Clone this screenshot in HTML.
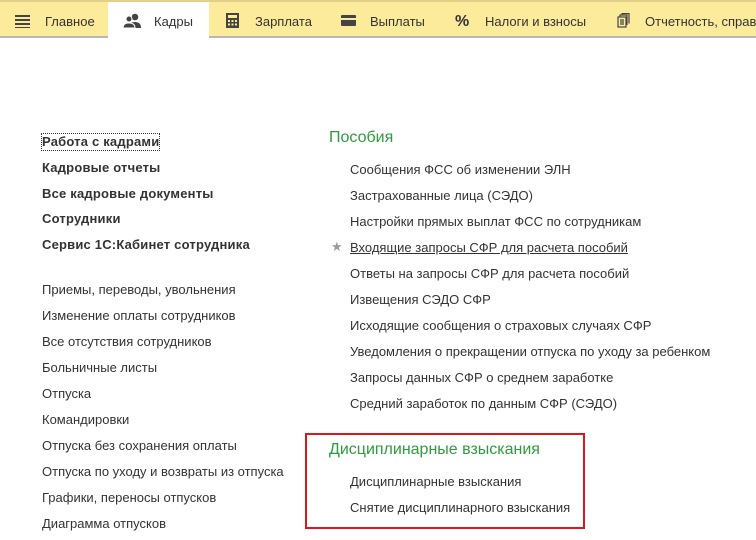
<!DOCTYPE html>
<html><head><meta charset="utf-8"><style>
body{margin:0;width:756px;height:540px;background:#fff;font-family:"Liberation Sans",Arial,sans-serif;color:#333;position:relative;overflow:hidden;font-size:13px}
.bar{position:absolute;left:0;top:0;width:756px;height:38px;background:#fbeb9b;border-top:2px solid #e0d08a;border-bottom:2px solid #b8b8b8;box-sizing:border-box}
.tab{position:absolute;top:0;height:36px;line-height:39px;font-size:13px;color:#333;white-space:nowrap}
.act{background:#fff}
.ic{position:absolute;top:11px}
.t{position:absolute;white-space:nowrap;line-height:16px;margin-top:1px}
.b{font-weight:bold;letter-spacing:0.2px}
.g{color:#2e9c3e;font-size:16px}
</style></head><body>
<div class="bar">
<div class="tab act" style="left:108px;width:101px"></div>
<svg class="ic" style="left:15px;top:12px" width="15" height="14"><rect y="1" width="15" height="2" fill="#444"/><rect y="5" width="15" height="2" fill="#444"/><rect y="9" width="15" height="2" fill="#444"/><rect y="13" width="15" height="1.5" fill="#444"/></svg>
<div class="tab" style="left:45px">Главное</div>
<svg class="ic" style="left:123px" width="20" height="15"><circle cx="12" cy="4" r="3.3" fill="#444"/><path d="M6 15q0-6 6-6t6 6z" fill="#444"/><circle cx="6" cy="6" r="3" fill="#444" stroke="#fff"/><path d="M0 15q0-5 6-5t6 5z" fill="#444" stroke="#fff"/></svg>
<div class="tab" style="left:154px">Кадры</div>
<svg class="ic" style="left:226px" width="13" height="15"><rect width="13" height="15" fill="#444"/><rect x="2" y="2" width="9" height="3" fill="#fbeb9b"/><g fill="#fbeb9b"><rect x="2" y="7" width="2" height="2"/><rect x="5.5" y="7" width="2" height="2"/><rect x="9" y="7" width="2" height="2"/><rect x="2" y="10.5" width="2" height="2"/><rect x="5.5" y="10.5" width="2" height="2"/><rect x="9" y="10.5" width="2" height="2"/></g></svg>
<div class="tab" style="left:255px">Зарплата</div>
<svg class="ic" style="left:341px;top:13px" width="15" height="11"><rect width="15" height="11" rx="1" fill="#444"/><rect y="3" width="15" height="2" fill="#fbeb9b"/></svg>
<div class="tab" style="left:370px">Выплаты</div>
<div class="tab b" style="left:455px;font-size:16px">%</div>
<div class="tab" style="left:485px">Налоги и взносы</div>
<svg class="ic" style="left:617px" width="13" height="15" fill="none" stroke="#444" stroke-width="1.2"><rect x="1" y="4" width="8" height="10"/><path d="M3 4V2h7v10M5 2V0.5h7v10M3 7h4M3 9h4M3 11h4"/></svg>
<div class="tab" style="left:645px">Отчетность, справ</div>
</div>
<div class="t b" style="left:42px;top:133px;outline:1px dotted #333;outline-offset:0">Работа с кадрами</div>
<div class="t b" style="left:42px;top:159px">Кадровые отчеты</div>
<div class="t b" style="left:42px;top:185px">Все кадровые документы</div>
<div class="t b" style="left:42px;top:210px">Сотрудники</div>
<div class="t b" style="left:42px;top:236px">Сервис 1С:Кабинет сотрудника</div>
<div class="t" style="left:42px;top:281px">Приемы, переводы, увольнения</div>
<div class="t" style="left:42px;top:307px">Изменение оплаты сотрудников</div>
<div class="t" style="left:42px;top:333px">Все отсутствия сотрудников</div>
<div class="t" style="left:42px;top:359px">Больничные листы</div>
<div class="t" style="left:42px;top:385px">Отпуска</div>
<div class="t" style="left:42px;top:411px">Командировки</div>
<div class="t" style="left:42px;top:437px">Отпуска без сохранения оплаты</div>
<div class="t" style="left:42px;top:463px">Отпуска по уходу и возвраты из отпуска</div>
<div class="t" style="left:42px;top:489px">Графики, переносы отпусков</div>
<div class="t" style="left:42px;top:515px">Диаграмма отпусков</div>
<div class="t g" style="left:329px;top:129px">Пособия</div>
<div class="t" style="left:350px;top:161px">Сообщения ФСС об изменении ЭЛН</div>
<div class="t" style="left:350px;top:187px">Застрахованные лица (СЭДО)</div>
<div class="t" style="left:350px;top:213px">Настройки прямых выплат ФСС по сотрудникам</div>
<div class="t" style="left:331px;top:238px;color:#999">★</div>
<div class="t" style="left:350px;top:239px;text-decoration:underline">Входящие запросы СФР для расчета пособий</div>
<div class="t" style="left:350px;top:265px">Ответы на запросы СФР для расчета пособий</div>
<div class="t" style="left:350px;top:291px">Извещения СЭДО СФР</div>
<div class="t" style="left:350px;top:317px">Исходящие сообщения о страховых случаях СФР</div>
<div class="t" style="left:350px;top:343px">Уведомления о прекращении отпуска по уходу за ребенком</div>
<div class="t" style="left:350px;top:369px">Запросы данных СФР о среднем заработке</div>
<div class="t" style="left:350px;top:395px">Средний заработок по данным СФР (СЭДО)</div>
<div style="position:absolute;left:305px;top:433px;width:276px;height:92px;border:2px solid #e0141b"></div>
<div class="t g" style="left:329px;top:441px">Дисциплинарные взыскания</div>
<div class="t" style="left:350px;top:473px">Дисциплинарные взыскания</div>
<div class="t" style="left:350px;top:499px">Снятие дисциплинарного взыскания</div>
</body></html>
